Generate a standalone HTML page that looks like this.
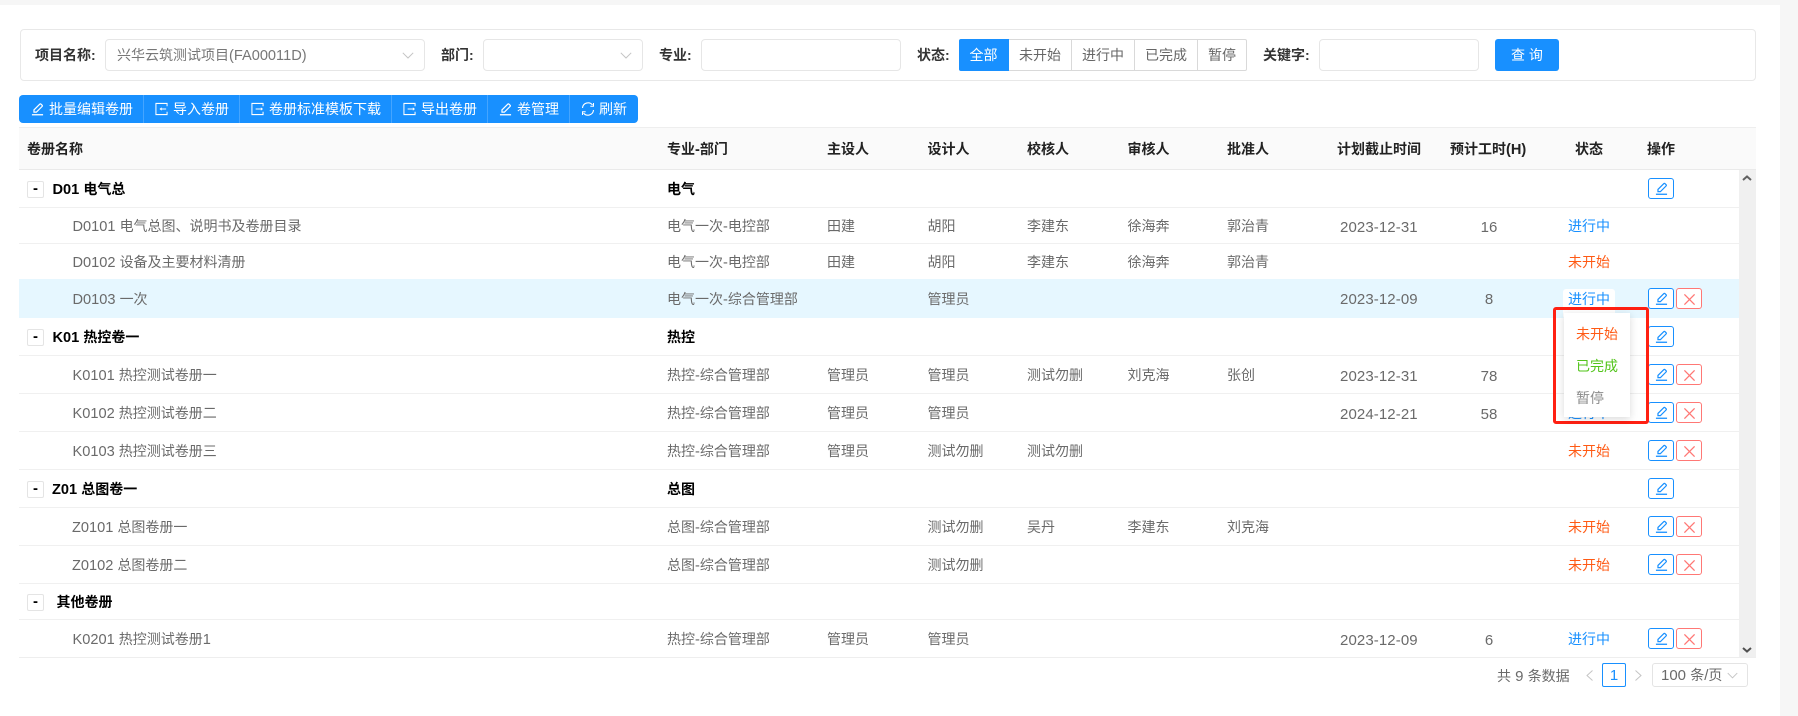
<!DOCTYPE html>
<html lang="zh-CN"><head><meta charset="utf-8"><title>卷册</title>
<style>
*{box-sizing:border-box}
html,body{margin:0;padding:0;width:1798px;height:716px;overflow:hidden;background:#f6f6f6}
body{position:relative;font:14px/20px "Liberation Sans","Noto Sans CJK SC",sans-serif;color:#6a6a6a}
em{font-style:normal;font-size:14.6px}
.pg em{font-size:15px}
.a{position:absolute;white-space:nowrap}
.p{position:absolute;left:0;top:5px;width:1780px;height:711px;background:#fff}
.b{position:absolute;border:1px solid #e6e6e6;border-radius:4px;background:#fff;height:32px;top:39px}
.l{position:absolute;top:45px;font-weight:bold;color:#333;white-space:nowrap}
.r{position:absolute;left:19px;width:1720px;border-bottom:1px solid #f0f0f0}
.r>span{position:absolute;top:0;white-space:nowrap;line-height:inherit}
.r>.c7,.r>.c8{top:1px}
.n{left:53.5px}.c1{left:648px}.c2{left:808px}.c3{left:908.5px}.c4{left:1008px}.c5{left:1108.5px}.c6{left:1208px}
.c7{left:1321px;font-size:15px;letter-spacing:.1px}.c8{left:1420px;width:100px;text-align:center;font-size:15px}.c9{left:1520px;width:100px;text-align:center}
.g{font-weight:bold;color:#000}
.g .c1{color:#000}
.bl{color:#1890ff}.or{color:#ff5a14}
.x{position:absolute;left:8px;top:11px;width:17px;height:17px;border:1px solid #e4e4e4;border-radius:2px;background:#fff;color:#000;font-weight:bold;font-size:15px;line-height:14px;text-align:center}
.e,.d{position:absolute;top:8px;width:26px;height:21px;border-radius:3px;background:#fff}
.e{left:1629px;border:1px solid #1890ff}
.d{left:1657px;border:1px solid #ff7875}
.e svg{position:absolute;left:5.5px;top:3px}
.d svg{position:absolute;left:7px;top:5px}
.h{position:absolute;top:127px;left:19px;width:1737px;height:43px;background:#fafafa;border-top:1px solid #eee;border-bottom:1px solid #eaeaea}
.h span{position:absolute;top:0;line-height:43px;font-weight:bold;color:#222;white-space:nowrap}
.t{position:absolute;left:19px;top:95px;width:619px;height:28px;background:#1890ff;border-radius:4px;color:#fff}
.t i{position:absolute;top:0;width:1px;height:28px;background:#45a5ff}
.t span{position:absolute;top:0;line-height:28px;white-space:nowrap}
.t svg{position:absolute;top:7px}
.s{position:absolute;top:39px;height:32px;line-height:30px;text-align:center;border:1px solid #d9d9d9;border-left:0;color:#666;background:#fff}
</style></head><body>
<svg width="0" height="0" style="position:absolute"><defs>
<symbol id="pen" viewBox="0 0 14 14"><path d="M1 13.2H13" stroke="currentColor" stroke-width="1.4"/><path d="M3.2 10.4V8L9.4 1.8a1 1 0 0 1 1.4 0l1.1 1.1a1 1 0 0 1 0 1.4L5.8 10.4Z" fill="none" stroke="currentColor" stroke-width="1.3"/></symbol>
<symbol id="imp" viewBox="0 0 14 14"><path d="M13 4V1H1V13H13V10" fill="none" stroke="currentColor" stroke-width="1.1"/><path d="M6 7H12" stroke="currentColor" stroke-width="1.1"/><path d="M4.8 7L7.2 5.2V8.8Z" fill="currentColor"/></symbol>
<symbol id="exp" viewBox="0 0 14 14"><path d="M13 4V1H1V13H13V10" fill="none" stroke="currentColor" stroke-width="1.1"/><path d="M5 7H11" stroke="currentColor" stroke-width="1.1"/><path d="M13 7L10.6 5.2V8.8Z" fill="currentColor"/></symbol>
<symbol id="ref" viewBox="0 0 14 14"><path d="M1.5 6A5.6 5.6 0 0 1 11.5 3M12.5 8A5.6 5.6 0 0 1 2.5 11" fill="none" stroke="currentColor" stroke-width="1.1"/><path d="M12.5 1V4.3H9.3M1.5 13V9.7H4.7" fill="none" stroke="currentColor" stroke-width="1"/></symbol>
<symbol id="cl" viewBox="0 0 11 11"><path d="M.4 .4L10.6 10.6M10.6 .4L.4 10.6" stroke="#ff7875" stroke-width="1.3"/></symbol>
<symbol id="dn" viewBox="0 0 12 7"><path d="M.8.8L6 6L11.2.8" fill="none" stroke="#c4c4c4" stroke-width="1"/></symbol>
</defs></svg>
<div class="p"></div>

<div class="a" style="left:19.5px;top:29px;width:1736px;height:52px;border:1px solid #e8e8e8;border-radius:4px"></div>
<div class="l" style="left:35px">项目名称:</div>
<div class="b" style="left:105px;width:320px"><span class="a" style="left:11px;top:5px;color:#777">兴华云筑测试项目<em>(FA00011D)</em></span><svg class="a" style="left:296px;top:12px" width="12" height="7"><use href="#dn"/></svg></div>
<div class="l" style="left:441px">部门:</div>
<div class="b" style="left:483px;width:160px"><svg class="a" style="left:136px;top:12px" width="12" height="7"><use href="#dn"/></svg></div>
<div class="l" style="left:659px">专业:</div>
<div class="b" style="left:701px;width:200px"></div>
<div class="l" style="left:917px">状态:</div>
<div class="s" style="left:959px;width:50px;background:#1890ff;border-color:#1890ff;color:#fff;border-radius:2px 0 0 2px">全部</div>
<div class="s" style="left:1009px;width:63px">未开始</div>
<div class="s" style="left:1072px;width:63px">进行中</div>
<div class="s" style="left:1135px;width:63px">已完成</div>
<div class="s" style="left:1198px;width:49px;border-radius:0 2px 2px 0">暂停</div>
<div class="l" style="left:1263px">关键字:</div>
<div class="b" style="left:1319px;width:160px"></div>
<div class="a" style="left:1495px;top:39px;width:64px;height:32px;background:#1890ff;border-radius:3px;color:#fff;text-align:center;line-height:32px">查 询</div>

<div class="t">
<svg style="left:12px;color:#fff" width="13" height="14"><use href="#pen"/></svg><span style="left:30px">批量编辑卷册</span><i style="left:124px"></i>
<svg style="left:136px;color:#fff" width="13" height="14"><use href="#imp"/></svg><span style="left:154px">导入卷册</span><i style="left:220px"></i>
<svg style="left:232px;color:#fff" width="13" height="14"><use href="#exp"/></svg><span style="left:250px">卷册标准模板下载</span><i style="left:372px"></i>
<svg style="left:384px;color:#fff" width="13" height="14"><use href="#exp"/></svg><span style="left:402px">导出卷册</span><i style="left:468px"></i>
<svg style="left:480px;color:#fff" width="13" height="14"><use href="#pen"/></svg><span style="left:498px">卷管理</span><i style="left:550px"></i>
<svg style="left:562px;color:#fff" width="14" height="14"><use href="#ref"/></svg><span style="left:580px">刷新</span>
</div>

<div class="h">
<span style="left:8px">卷册名称</span><span style="left:648px">专业<em>-</em>部门</span><span style="left:808px">主设人</span><span style="left:908.5px">设计人</span><span style="left:1008px">校核人</span><span style="left:1108.5px">审核人</span><span style="left:1208px">批准人</span><span style="left:1318px">计划截止时间</span><span style="left:1431px">预计工时<em>(H)</em></span><span style="left:1556px">状态</span><span style="left:1628px">操作</span>
</div>

<div class="r g" style="top:170px;height:38px;line-height:39px"><b class="x">-</b><span style="left:33.5px"><em>D01 </em>电气总</span><span class="c1">电气</span><b class="e"><svg width="13" height="13" color="#1890ff"><use href="#pen"/></svg></b></div>
<div class="r" style="top:208px;height:36px;line-height:37px"><span class="n"><em>D0101 </em>电气总图、说明书及卷册目录</span><span class="c1">电气一次<em>-</em>电控部</span><span class="c2">田建</span><span class="c3">胡阳</span><span class="c4">李建东</span><span class="c5">徐海奔</span><span class="c6">郭治青</span><span class="c7">2023-12-31</span><span class="c8">16</span><span class="c9 bl">进行中</span></div>
<div class="r" style="top:244px;height:36px;line-height:37px;border-bottom:0"><span class="n"><em>D0102 </em>设备及主要材料清册</span><span class="c1">电气一次<em>-</em>电控部</span><span class="c2">田建</span><span class="c3">胡阳</span><span class="c4">李建东</span><span class="c5">徐海奔</span><span class="c6">郭治青</span><span class="c9 or">未开始</span></div>
<div class="r" style="top:279px;height:39px;line-height:40px;background:#e6f7ff;border-bottom:0"><span class="n"><em>D0103 </em>一次</span><span class="c1">电气一次<em>-</em>综合管理部</span><span class="c3">管理员</span><span class="c7">2023-12-09</span><span class="c8">8</span><span class="a" style="left:1544px;top:10px;width:52px;height:30px;background:#fff;border-radius:3px"></span><span class="c9 bl">进行中</span><b class="e" style="top:9px"><svg width="13" height="13" color="#1890ff"><use href="#pen"/></svg></b><b class="d" style="top:9px"><svg width="11" height="11"><use href="#cl"/></svg></b></div>
<div class="r g" style="top:318px;height:38px;line-height:39px"><b class="x">-</b><span style="left:33.5px"><em>K01 </em>热控卷一</span><span class="c1">热控</span><b class="e"><svg width="13" height="13" color="#1890ff"><use href="#pen"/></svg></b></div>
<div class="r" style="top:356px;height:38px;line-height:39px"><span class="n"><em>K0101 </em>热控测试卷册一</span><span class="c1">热控<em>-</em>综合管理部</span><span class="c2">管理员</span><span class="c3">管理员</span><span class="c4">测试勿删</span><span class="c5">刘克海</span><span class="c6">张创</span><span class="c7">2023-12-31</span><span class="c8">78</span><span class="c9 bl">进行中</span><b class="e"><svg width="13" height="13" color="#1890ff"><use href="#pen"/></svg></b><b class="d"><svg width="11" height="11"><use href="#cl"/></svg></b></div>
<div class="r" style="top:394px;height:38px;line-height:39px"><span class="n"><em>K0102 </em>热控测试卷册二</span><span class="c1">热控<em>-</em>综合管理部</span><span class="c2">管理员</span><span class="c3">管理员</span><span class="c7">2024-12-21</span><span class="c8">58</span><span class="c9 bl">进行中</span><b class="e"><svg width="13" height="13" color="#1890ff"><use href="#pen"/></svg></b><b class="d"><svg width="11" height="11"><use href="#cl"/></svg></b></div>
<div class="r" style="top:432px;height:38px;line-height:39px"><span class="n"><em>K0103 </em>热控测试卷册三</span><span class="c1">热控<em>-</em>综合管理部</span><span class="c2">管理员</span><span class="c3">测试勿删</span><span class="c4">测试勿删</span><span class="c9 or">未开始</span><b class="e"><svg width="13" height="13" color="#1890ff"><use href="#pen"/></svg></b><b class="d"><svg width="11" height="11"><use href="#cl"/></svg></b></div>
<div class="r g" style="top:470px;height:38px;line-height:39px"><b class="x">-</b><span style="left:33px"><em>Z01 </em>总图卷一</span><span class="c1">总图</span><b class="e"><svg width="13" height="13" color="#1890ff"><use href="#pen"/></svg></b></div>
<div class="r" style="top:508px;height:38px;line-height:39px"><span class="n" style="left:53px"><em>Z0101 </em>总图卷册一</span><span class="c1">总图<em>-</em>综合管理部</span><span class="c3">测试勿删</span><span class="c4">吴丹</span><span class="c5">李建东</span><span class="c6">刘克海</span><span class="c9 or">未开始</span><b class="e"><svg width="13" height="13" color="#1890ff"><use href="#pen"/></svg></b><b class="d"><svg width="11" height="11"><use href="#cl"/></svg></b></div>
<div class="r" style="top:546px;height:38px;line-height:39px"><span class="n" style="left:53px"><em>Z0102 </em>总图卷册二</span><span class="c1">总图<em>-</em>综合管理部</span><span class="c3">测试勿删</span><span class="c9 or">未开始</span><b class="e"><svg width="13" height="13" color="#1890ff"><use href="#pen"/></svg></b><b class="d"><svg width="11" height="11"><use href="#cl"/></svg></b></div>
<div class="r g" style="top:584px;height:36px;line-height:37px"><b class="x" style="top:10px">-</b><span style="left:37.5px">其他卷册</span></div>
<div class="r" style="top:620px;height:38px;line-height:39px"><span class="n"><em>K0201 </em>热控测试卷册<em>1</em></span><span class="c1">热控<em>-</em>综合管理部</span><span class="c2">管理员</span><span class="c3">管理员</span><span class="c7">2023-12-09</span><span class="c8">6</span><span class="c9 bl">进行中</span><b class="e"><svg width="13" height="13" color="#1890ff"><use href="#pen"/></svg></b><b class="d"><svg width="11" height="11"><use href="#cl"/></svg></b></div>

<div class="a" style="left:1739px;top:170px;width:17px;height:488px;background:#f0f0f0"></div>
<svg class="a" style="left:1742px;top:175px" width="10" height="6"><path d="M1 5L5 1.5L9 5" fill="none" stroke="#606060" stroke-width="2"/></svg>
<svg class="a" style="left:1742px;top:647px" width="10" height="6"><path d="M1 1L5 4.5L9 1" fill="none" stroke="#505050" stroke-width="2"/></svg>
<div class="a" style="left:19px;top:657px;width:1737px;height:1px;background:#eee"></div>

<div class="a" style="left:1553px;top:307px;width:96px;height:117px;border:3px solid #ff2012;border-radius:3px"></div>
<div class="a" style="left:1564px;top:313px;width:66px;height:104px;background:#fff;box-shadow:0 2px 8px rgba(0,0,0,.15)"></div>
<div class="a or" style="left:1576px;top:324px">未开始</div>
<div class="a" style="left:1576px;top:356px;color:#52c41a">已完成</div>
<div class="a" style="left:1576px;top:388px;color:#8c8c8c">暂停</div>

<div class="a pg" style="left:1497px;top:666px">共<em> 9 </em>条数据</div>
<svg class="a" style="left:1586px;top:670px" width="7" height="11"><path d="M6.5 .5L1 5.5L6.5 10.5" fill="none" stroke="#c4c4c4"/></svg>
<div class="a bl" style="left:1602px;top:663px;width:24px;height:24px;border:1px solid #1890ff;border-radius:2px;text-align:center;line-height:24px;background:#fff;font-size:15px">1</div>
<svg class="a" style="left:1635px;top:670px" width="7" height="11"><path d="M.5 .5L6 5.5L.5 10.5" fill="none" stroke="#c4c4c4"/></svg>
<div class="a pg" style="left:1652px;top:663px;width:96px;height:24px;border:1px solid #e4e4e4;border-radius:3px;background:#fff"><span class="a" style="left:8px;top:1px"><em>100 </em>条<em>/</em>页</span><svg class="a" style="left:74px;top:8px" width="11" height="7"><use href="#dn"/></svg></div>
</body></html>
